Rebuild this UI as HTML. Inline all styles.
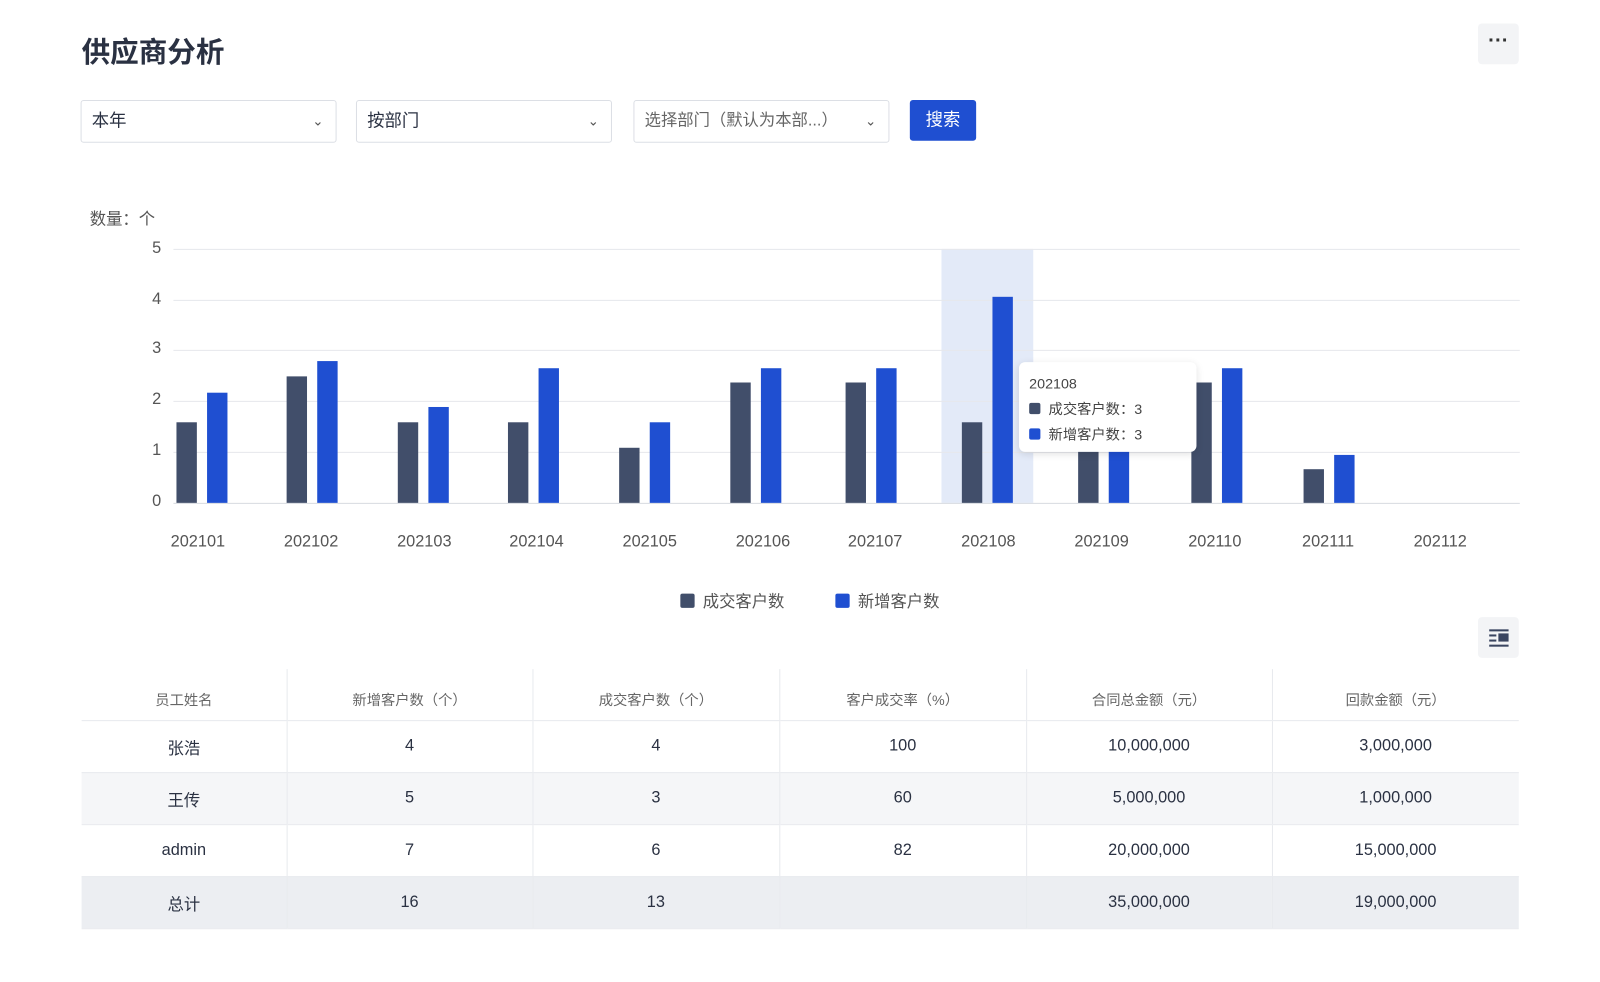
<!DOCTYPE html>
<html><head><meta charset="utf-8"><style>
*{margin:0;padding:0;box-sizing:border-box}
body{width:1600px;height:963px;background:#fff;font-family:"Liberation Sans","Noto Sans CJK SC",sans-serif;color:#333a4d;position:relative;overflow:hidden}
#w{position:absolute;left:0;top:0;width:1600px;height:963px;transform:scale(1.02);transform-origin:0 0}
.a{position:absolute}
.sel{position:absolute;top:98px;height:42px;border:1px solid #dcdfe5;border-radius:3px;font-size:17px;line-height:40px;padding-left:10px;color:#2a3142}
.sel .c{position:absolute;right:12px;top:0;font-size:13px;color:#555}
.g{position:absolute;left:170px;width:1320px;height:1px;background:#e6e8ec}
.yl{position:absolute;left:140px;width:18px;text-align:right;font-size:16px;color:#555}
.b{position:absolute;width:20px}
.d{background:#414e6a}.u{background:#1f4fd1}
.xl{position:absolute;top:523px;width:90px;margin-left:-45px;text-align:center;font-size:16px;color:#555}
table{position:absolute;left:80px;top:656px;width:1409px;border-collapse:collapse}
td{text-align:center;font-size:16px;color:#2a3142;border-left:1px solid #e8eaee;height:51px;border-bottom:1px solid #e8eaee}
td:first-child{border-left:none}
tr.h td{font-size:14px;color:#666;height:50px;padding-top:10px}
tr.s td{background:#f5f6f8}
tr.t td{background:#eceef2}
</style></head><body><div id="w">
<div class="a" style="left:80px;top:30px;font-size:28px;font-weight:bold;color:#2a3142">供应商分析</div>
<div class="a" style="left:1449px;top:23px;width:40px;height:40px;background:#f3f4f6;border-radius:4px;text-align:center;line-height:34px;font-size:20px;font-weight:bold;color:#333">···</div>
<div class="sel" style="left:79px;width:251px">本年<span class="c">⌄</span></div>
<div class="sel" style="left:349px;width:251px">按部门<span class="c">⌄</span></div>
<div class="sel" style="left:621px;width:251px;color:#666;font-size:16px">选择部门（默认为本部...）<span class="c">⌄</span></div>
<div class="a" style="left:892px;top:98px;width:65px;height:40px;background:#1f4fd1;border-radius:3px;color:#fff;font-size:17px;text-align:center;line-height:40px">搜索</div>
<div class="a" style="left:88px;top:201px;font-size:16px;color:#555">数量：个</div>
<div class="a" style="left:923px;top:244px;width:90px;height:249px;background:#e3eaf8"></div>
<div class="g" style="top:244px"></div><div class="g" style="top:294px"></div><div class="g" style="top:343px"></div><div class="g" style="top:393px"></div><div class="g" style="top:443px"></div><div class="g" style="top:493px;background:#d8dbe0"></div>
<div class="yl" style="top:235px">5</div><div class="yl" style="top:285px">4</div><div class="yl" style="top:333px">3</div><div class="yl" style="top:383px">2</div><div class="yl" style="top:433px">1</div><div class="yl" style="top:483px">0</div>
<div class="b d" style="left:173px;top:414px;height:79px"></div><div class="b u" style="left:203px;top:385px;height:108px"></div>
<div class="b d" style="left:281px;top:369px;height:124px"></div><div class="b u" style="left:311px;top:354px;height:139px"></div>
<div class="b d" style="left:390px;top:414px;height:79px"></div><div class="b u" style="left:420px;top:399px;height:94px"></div>
<div class="b d" style="left:498px;top:414px;height:79px"></div><div class="b u" style="left:528px;top:361px;height:132px"></div>
<div class="b d" style="left:607px;top:439px;height:54px"></div><div class="b u" style="left:637px;top:414px;height:79px"></div>
<div class="b d" style="left:716px;top:375px;height:118px"></div><div class="b u" style="left:746px;top:361px;height:132px"></div>
<div class="b d" style="left:829px;top:375px;height:118px"></div><div class="b u" style="left:859px;top:361px;height:132px"></div>
<div class="b d" style="left:943px;top:414px;height:79px"></div><div class="b u" style="left:973px;top:291px;height:202px"></div>
<div class="b d" style="left:1057px;top:440px;height:53px"></div><div class="b u" style="left:1087px;top:440px;height:53px"></div>
<div class="b d" style="left:1168px;top:375px;height:118px"></div><div class="b u" style="left:1198px;top:361px;height:132px"></div>
<div class="b d" style="left:1278px;top:460px;height:33px"></div><div class="b u" style="left:1308px;top:446px;height:47px"></div>
<div class="a" style="left:999px;top:355px;width:174px;height:88px;background:#fff;border-radius:6px;box-shadow:0 2px 8px rgba(0,0,0,.12);font-size:14px;color:#444;padding:9px 10px;line-height:25px">202108<br><span style="display:inline-block;width:11px;height:11px;background:#414e6a;border-radius:2px;margin-right:8px"></span>成交客户数：3<br><span style="display:inline-block;width:11px;height:11px;background:#1f4fd1;border-radius:2px;margin-right:8px"></span>新增客户数：3</div>
<div class="xl" style="left:194px">202101</div><div class="xl" style="left:305px">202102</div><div class="xl" style="left:416px">202103</div><div class="xl" style="left:526px">202104</div><div class="xl" style="left:637px">202105</div><div class="xl" style="left:748px">202106</div><div class="xl" style="left:858px">202107</div><div class="xl" style="left:969px">202108</div><div class="xl" style="left:1080px">202109</div><div class="xl" style="left:1191px">202110</div><div class="xl" style="left:1302px">202111</div><div class="xl" style="left:1412px">202112</div>
<div class="a" style="left:667px;top:576px;font-size:16px;color:#555"><span style="display:inline-block;width:14px;height:14px;background:#414e6a;border-radius:2px;margin-right:8px;vertical-align:-1px"></span>成交客户数<span style="display:inline-block;width:14px;height:14px;background:#1f4fd1;border-radius:2px;margin:0 8px 0 50px;vertical-align:-1px"></span>新增客户数</div>
<div class="a" style="left:1449px;top:605px;width:40px;height:40px;background:#f3f4f6;border-radius:4px">
<svg width="40" height="40"><g fill="#3a4560"><rect x="11" y="12" width="19" height="2"/><rect x="11" y="17" width="7" height="2"/><rect x="11" y="22" width="7" height="2"/><rect x="20" y="16" width="10" height="8"/><rect x="11" y="27" width="19" height="2"/></g></svg></div>
<table>
<tr class="h"><td style="width:201px">员工姓名</td><td style="width:241px">新增客户数（个）</td><td style="width:242px">成交客户数（个）</td><td style="width:242px">客户成交率（%）</td><td style="width:241px">合同总金额（元）</td><td>回款金额（元）</td></tr>
<tr><td>张浩</td><td>4</td><td>4</td><td>100</td><td>10,000,000</td><td>3,000,000</td></tr>
<tr class="s"><td>王传</td><td>5</td><td>3</td><td>60</td><td>5,000,000</td><td>1,000,000</td></tr>
<tr><td>admin</td><td>7</td><td>6</td><td>82</td><td>20,000,000</td><td>15,000,000</td></tr>
<tr class="t"><td>总计</td><td>16</td><td>13</td><td></td><td>35,000,000</td><td>19,000,000</td></tr>
</table>
</div></body></html>
